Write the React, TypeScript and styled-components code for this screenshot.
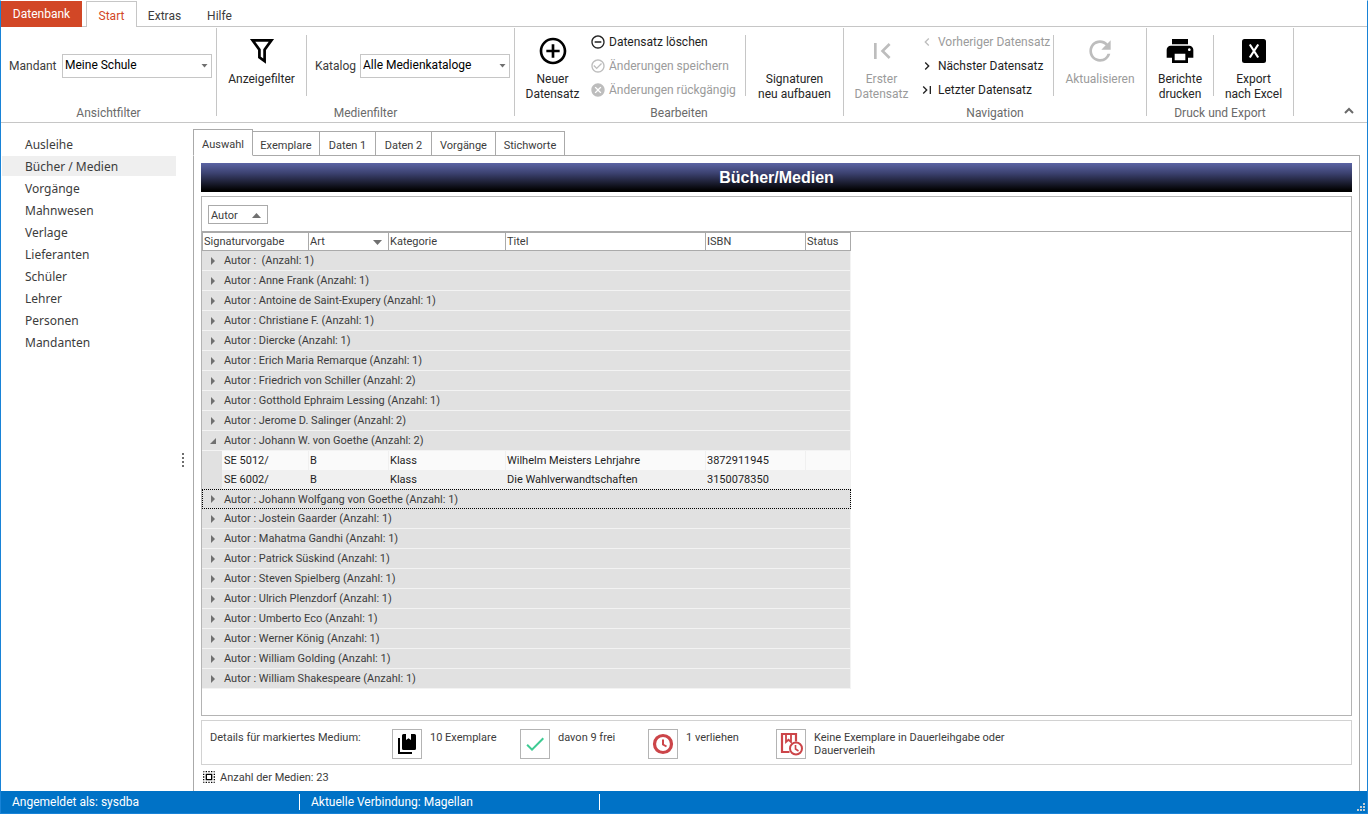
import React, { useState } from "react";
import styled, { createGlobalStyle, css } from "styled-components";
import {
  MdAddCircleOutline,
  MdRemoveCircleOutline,
  MdCheckCircleOutline,
  MdCancel,
  MdFirstPage,
  MdLastPage,
  MdNavigateBefore,
  MdNavigateNext,
  MdRefresh,
  MdPrint,
  MdCheck,
  MdSelectAll,
} from "react-icons/md";

const uiFont = `Roboto, "Open Sans", sans-serif`;
const sidebarFont = `"Noto Sans", "Open Sans", sans-serif`;

const GlobalStyle = createGlobalStyle`
  *, *::before, *::after { box-sizing: border-box; }
  body { margin: 0; background: #fff; font-family: ${uiFont}; font-size: 11px; color: #3c3c3c; }
  button, select { font: inherit; color: inherit; }
`;

const Window = styled.div`
  display: flex;
  flex-direction: column;
  min-height: 100vh;
  border: 1px solid #1883d7;
  border-top-color: #fff;
`;

/* ---------- ribbon ---------- */

const RibbonTabs = styled.nav`
  display: flex;
  height: 26px;
  border-bottom: 1px solid #c6c6c6;
  font-size: 12px;
`;

const RibbonTab = styled.button<{ $kind?: "file" | "active" }>`
  height: 26px;
  padding: 3px 0 0;
  width: 55px;
  border: 0;
  background: none;
  color: #3c3c3c;
  ${(p) =>
    p.$kind === "file" &&
    css`
      width: 81px;
      padding: 0;
      margin-right: 4px;
      background: #d24726;
      color: #fff;
    `}
  ${(p) =>
    p.$kind === "active" &&
    css`
      width: 51px;
      border: 1px solid #c6c6c6;
      border-bottom: 0;
      background: #fff;
      color: #d24726;
    `}
`;

const RibbonBar = styled.header`
  display: flex;
  height: 96px;
  border-bottom: 1px solid #c6c6c6;
  font-size: 12px;
`;

const Group = styled.section<{ $width: number }>`
  display: flex;
  flex-direction: column;
  justify-content: space-between;
  flex: none;
  width: ${(p) => p.$width}px;
`;

const GroupBody = styled.div`
  display: flex;
  align-items: flex-start;
`;

const GroupCaption = styled.div`
  line-height: 16px;
  padding-bottom: 1px;
  text-align: center;
  color: #6a6a6a;
`;

const GroupDivider = styled.div`
  flex: none;
  width: 1px;
  height: 88px;
  margin-top: 1px;
  background: #c6c6c6;
`;

const InnerDivider = styled.div`
  flex: none;
  width: 1px;
  height: 61px;
  margin-top: 8px;
  background: #c6c6c6;
`;

const BigButton = styled.button<{ $width: number }>`
  display: flex;
  flex-direction: column;
  align-items: center;
  gap: 5px;
  width: ${(p) => p.$width}px;
  padding: 8px 0 0;
  border: 0;
  background: none;
  line-height: 15px;
  text-align: center;
  white-space: pre-line;
  color: #262626;
  &:disabled {
    color: #9b9b9b;
  }
`;

const BigIcon = styled.span`
  display: flex;
  align-items: center;
  justify-content: center;
  width: 32px;
  height: 32px;
  color: #000;
  ${BigButton}:disabled & {
    color: #bdbdbd;
  }
`;

const CommandList = styled.div<{ $width: number }>`
  display: flex;
  flex-direction: column;
  width: ${(p) => p.$width}px;
  padding-top: 3px;
`;

const Command = styled.button`
  display: flex;
  align-items: center;
  gap: 3px;
  height: 24px;
  padding: 0;
  border: 0;
  background: none;
  white-space: nowrap;
  color: #1e1e1e;
  svg {
    flex: none;
    color: #222;
  }
  &:disabled {
    color: #9b9b9b;
  }
  &:disabled svg {
    color: #bdbdbd;
  }
`;

const Field = styled.div`
  display: flex;
  align-items: center;
  justify-content: space-between;
  flex: 1;
  margin: 27px 4px 0 8px;
`;

const SelectBox = styled.div`
  display: grid;
  align-items: center;
  width: 150px;
  & > * {
    grid-area: 1 / 1;
  }
  svg {
    justify-self: end;
    margin-right: 4px;
    pointer-events: none;
  }
`;

const Select = styled.select`
  width: 100%;
  height: 24px;
  padding: 0 16px 2px 2px;
  border: 1px solid #c6c6c6;
  border-radius: 0;
  appearance: none;
  background: #fff;
  color: #000;
`;

const Collapse = styled.button`
  display: flex;
  align-self: flex-end;
  margin: 0 11px 6px auto;
  padding: 2px;
  border: 0;
  background: none;
`;

/* ---------- body ---------- */

const Body = styled.main`
  display: flex;
  flex: 1;
`;

const Sidebar = styled.nav`
  display: flex;
  flex-direction: column;
  gap: 2px;
  flex: none;
  width: 176px;
  padding: 11px 1px 0;
  font-family: ${sidebarFont};
`;

const SideLink = styled.a<{ $active?: boolean }>`
  height: 20px;
  padding-left: 23px;
  line-height: 22px;
  font-size: 12px;
  color: #3c3c3c;
  text-decoration: none;
  background: ${(p) => (p.$active ? "#efefef" : "none")};
`;

const Splitter = styled.div`
  display: flex;
  flex-direction: column;
  align-items: center;
  justify-content: center;
  gap: 2px;
  flex: none;
  width: 11px;
  margin-right: 5px;
  padding-top: 6px;
  span {
    width: 2px;
    height: 2px;
    background: #6e6e6e;
  }
`;

const Content = styled.div`
  display: flex;
  flex-direction: column;
  flex: 1;
  min-width: 0;
  padding: 6px 7px 0 0;
`;

const Tabs = styled.div`
  display: flex;
  align-items: flex-end;
  height: 27px;
`;

const Tab = styled.button<{ $active?: boolean; $width: number }>`
  width: ${(p) => p.$width}px;
  height: 25px;
  padding: 4px 0 0;
  border: 1px solid #aaa;
  border-left-width: 0;
  background: #fff;
  white-space: nowrap;
  ${(p) =>
    p.$active &&
    css`
      height: 27px;
      border-left-width: 1px;
      border-bottom-color: #fff;
    `}
`;

const TabFill = styled.div`
  flex: 1;
  border-bottom: 1px solid #aaa;
`;

const Panel = styled.div`
  display: flex;
  flex-direction: column;
  flex: 1;
  padding: 7px 7px 0;
  border: 1px solid #aaa;
  border-width: 0 1px;
`;

const Banner = styled.h1`
  margin: 0 0 4px;
  height: 29px;
  line-height: 29px;
  text-align: center;
  font-family: "Liberation Sans", Arial, sans-serif;
  font-size: 16px;
  color: #fff;
  background: linear-gradient(#5b64a4, #3c4270 35%, #1a1c2e 70%, #000 95%);
`;

const GridBox = styled.div`
  flex: 1;
  border: 1px solid #b4b4b4;
`;

const GroupPanel = styled.div`
  height: 35px;
  padding: 8px 6px 0;
  border-bottom: 1px solid #aaa;
`;

const GroupChip = styled.button`
  display: flex;
  align-items: center;
  justify-content: space-between;
  width: 60px;
  height: 19px;
  padding: 1px 6px 0 2px;
  border: 1px solid #aaa;
  background: #fff;
`;

const Table = styled.table`
  width: 649px;
  table-layout: fixed;
  border-collapse: separate;
  border-spacing: 0;
  th {
    height: 19px;
    padding: 1px 6px 0 1px;
    border: 1px solid #aaa;
    border-left-width: 0;
    text-align: left;
    font-weight: normal;
    line-height: 16px;
  }
  th:first-child {
    border-left-width: 1px;
  }
  td {
    padding: 0 0 0 1px;
    line-height: 16px;
    white-space: nowrap;
  }
`;

const HeadCell = styled.div`
  display: flex;
  align-items: center;
  justify-content: space-between;
`;

const GroupRow = styled.tr<{ $focused?: boolean }>`
  background: #e1e1e1;
  td {
    height: 20px;
    padding: 0;
    border-bottom: 1px solid #f3f3f3;
    border-right: 1px solid #f3f3f3;
  }
  ${(p) =>
    p.$focused &&
    css`
      td {
        border: 1px dotted #000;
      }
    `}
`;

const GroupToggle = styled.button<{ $focused?: boolean }>`
  display: flex;
  align-items: center;
  width: 100%;
  padding: 1px 0 0 ${(p) => (p.$focused ? 6 : 7)}px;
  border: 0;
  background: none;
  line-height: 16px;
  white-space: pre;
  svg {
    flex: none;
    margin: 0 7px 1px 0;
  }
`;

const DataRow = styled.tr<{ $alt?: boolean }>`
  background: ${(p) => (p.$alt ? "#f0f0f0" : "#fafafa")};
  color: #1e1e1e;
  td {
    height: 19px;
    border-right: 1px solid #f0f0f0;
  }
  td:first-child {
    background: #e1e1e1;
    border: 0;
  }
  td:nth-child(2) {
    padding-left: 2px;
  }
`;

const Details = styled.section`
  display: flex;
  align-items: flex-start;
  height: 45px;
  margin-top: 4px;
  padding: 8px 8px 0;
  border: 1px solid #d2d2d2;
  line-height: 13px;
`;

const DetailsTitle = styled.div`
  flex: none;
  width: 182px;
  padding-top: 2px;
`;

const Detail = styled.div<{ $width: number }>`
  display: flex;
  gap: 8px;
  flex: 0 1 ${(p) => p.$width}px;
  padding-right: 8px;
`;

const DetailIcon = styled.span`
  display: flex;
  align-items: center;
  justify-content: center;
  flex: none;
  width: 30px;
  height: 30px;
  border: 1px solid #b4b4b4;
`;

const DetailText = styled.span`
  padding-top: 2px;
`;

const CountLine = styled.div`
  display: flex;
  align-items: center;
  gap: 3px;
  height: 26px;
  padding: 0 0 2px 0;
`;

const StatusBar = styled.footer`
  display: flex;
  align-items: center;
  height: 22px;
  background: #0072c6;
  color: #fff;
  font-size: 12px;
  svg {
    align-self: flex-end;
    margin: 0 2px 2px auto;
  }
`;

const StatusCell = styled.div<{ $width: number }>`
  display: flex;
  align-items: center;
  width: ${(p) => p.$width}px;
  height: 16px;
  padding-left: 11px;
  border-right: 1px solid #fff;
`;

/* ---------- drawings ---------- */

const Triangle = ({ dir }: { dir: "up" | "down" | "right" | "open" }) => {
  const points = {
    up: "0,6 4.5,1 9,6",
    down: "0,1 9,1 4.5,6",
    right: "2,0 6,4 2,8",
    open: "1,7 7,1 7,7",
  }[dir];
  const wide = dir === "up" || dir === "down";
  return (
    <svg width={wide ? 9 : 8} height={wide ? 7 : 8} aria-hidden="true">
      <polygon points={points} fill="#707070" />
    </svg>
  );
};

const FunnelIcon = () => (
  <svg width="32" height="32" viewBox="0 0 32 32" aria-hidden="true">
    <path
      d="M6.6 5.4H25.4L18.6 14.6V26.2L13.4 22.4V14.6Z"
      fill="none"
      stroke="currentColor"
      strokeWidth="2.7"
    />
  </svg>
);

const ExcelIcon = () => (
  <svg width="32" height="32" viewBox="0 0 32 32" aria-hidden="true">
    <rect x="4" y="4" width="24" height="24" rx="2.5" fill="currentColor" />
    <path d="M11.8 9.5L20.2 22.5M20.2 9.5L11.8 22.5" stroke="#fff" strokeWidth="2.2" />
  </svg>
);

const BooksIcon = () => (
  <svg width="20" height="22" viewBox="0 0 20 22" aria-hidden="true">
    <path d="M6 1H9V7L11.5 5.2L14 7V1H17.5Q19 1 19 2.5V15.5Q19 17 17.5 17H6.5Q5 17 5 15.5V2.5Q5 1 6.5 1Z" />
    <path d="M2 5V20H15" fill="none" stroke="#000" strokeWidth="2" />
  </svg>
);

const ClockIcon = () => (
  <svg width="22" height="22" viewBox="0 0 22 22" fill="none" stroke="#cc4549" aria-hidden="true">
    <circle cx="11" cy="11" r="8.5" strokeWidth="3.2" />
    <path d="M11 6.5V11.5L14.5 13.5" strokeWidth="2" />
  </svg>
);

const BookClockIcon = () => (
  <svg width="24" height="24" viewBox="0 0 24 24" fill="none" stroke="#cc4549" aria-hidden="true">
    <path d="M10.5 20H3V2H17V9.5" strokeWidth="2.2" />
    <path d="M7 2V10L9.5 7.8L12 10V2" strokeWidth="1.8" />
    <circle cx="17" cy="16.5" r="6" strokeWidth="2" fill="#fff" />
    <path d="M16.5 13V17L19.5 19" strokeWidth="1.6" />
  </svg>
);

const GripIcon = () => (
  <svg width="8" height="8" fill="#c4cdd4" aria-hidden="true">
    <path d="M6 0h2v2h-2zM3 3h2v2h-2zM6 3h2v2h-2zM0 6h2v2h-2zM3 6h2v2h-2zM6 6h2v2h-2z" />
  </svg>
);

/* ---------- data ---------- */

type Book = { sig: string; art: string; kategorie: string; titel: string; isbn: string };
type Author = { name: string; count: number; books?: Book[] };

const authors: Author[] = [
  { name: "", count: 1 },
  { name: "Anne Frank", count: 1 },
  { name: "Antoine de Saint-Exupery", count: 1 },
  { name: "Christiane F.", count: 1 },
  { name: "Diercke", count: 1 },
  { name: "Erich Maria Remarque", count: 1 },
  { name: "Friedrich von Schiller", count: 2 },
  { name: "Gotthold Ephraim Lessing", count: 1 },
  { name: "Jerome D. Salinger", count: 2 },
  {
    name: "Johann W. von Goethe",
    count: 2,
    books: [
      { sig: "SE 5012/", art: "B", kategorie: "Klass", titel: "Wilhelm Meisters Lehrjahre", isbn: "3872911945" },
      { sig: "SE 6002/", art: "B", kategorie: "Klass", titel: "Die Wahlverwandtschaften", isbn: "3150078350" },
    ],
  },
  { name: "Johann Wolfgang von Goethe", count: 1 },
  { name: "Jostein Gaarder", count: 1 },
  { name: "Mahatma Gandhi", count: 1 },
  { name: "Patrick Süskind", count: 1 },
  { name: "Steven Spielberg", count: 1 },
  { name: "Ulrich Plenzdorf", count: 1 },
  { name: "Umberto Eco", count: 1 },
  { name: "Werner König", count: 1 },
  { name: "William Golding", count: 1 },
  { name: "William Shakespeare", count: 1 },
];

const sideItems = [
  "Ausleihe",
  "Bücher / Medien",
  "Vorgänge",
  "Mahnwesen",
  "Verlage",
  "Lieferanten",
  "Schüler",
  "Lehrer",
  "Personen",
  "Mandanten",
];

const tabs: [string, number][] = [
  ["Auswahl", 60],
  ["Exemplare", 67],
  ["Daten 1", 56],
  ["Daten 2", 56],
  ["Vorgänge", 64],
  ["Stichworte", 69],
];

const ComboBox = ({ id, label, value }: { id: string; label: string; value: string }) => (
  <Field>
    <label htmlFor={id}>{label}</label>
    <SelectBox>
      <Select id={id} defaultValue={value}>
        <option>{value}</option>
      </Select>
      <svg width="7" height="4" aria-hidden="true">
        <polygon points="0.5,0 6.5,0 3.5,3.5" fill="#707070" />
      </svg>
    </SelectBox>
  </Field>
);

const Ribbon = () => (
  <RibbonBar>
    <Group $width={215}>
      <GroupBody>
        <ComboBox id="mandant" label="Mandant" value="Meine Schule" />
      </GroupBody>
      <GroupCaption>Ansichtfilter</GroupCaption>
    </Group>
    <GroupDivider />
    <Group $width={297}>
      <GroupBody>
        <BigButton $width={89}>
          <BigIcon><FunnelIcon /></BigIcon>
          Anzeigefilter
        </BigButton>
        <InnerDivider />
        <ComboBox id="katalog" label="Katalog" value="Alle Medienkataloge" />
      </GroupBody>
      <GroupCaption>Medienfilter</GroupCaption>
    </Group>
    <GroupDivider />
    <Group $width={328}>
      <GroupBody>
        <BigButton $width={75}>
          <BigIcon><MdAddCircleOutline size={32} /></BigIcon>
          {"Neuer\nDatensatz"}
        </BigButton>
        <CommandList $width={155}>
          <Command><MdRemoveCircleOutline size={16} />Datensatz löschen</Command>
          <Command disabled><MdCheckCircleOutline size={16} />Änderungen speichern</Command>
          <Command disabled><MdCancel size={16} />Änderungen rückgängig</Command>
        </CommandList>
        <InnerDivider />
        <BigButton $width={97}>
          <BigIcon />
          {"Signaturen\nneu aufbauen"}
        </BigButton>
      </GroupBody>
      <GroupCaption>Bearbeiten</GroupCaption>
    </Group>
    <GroupDivider />
    <Group $width={302}>
      <GroupBody>
        <BigButton $width={75} disabled>
          <BigIcon><MdFirstPage size={32} /></BigIcon>
          {"Erster\nDatensatz"}
        </BigButton>
        <CommandList $width={134}>
          <Command disabled><MdNavigateBefore size={16} />Vorheriger Datensatz</Command>
          <Command><MdNavigateNext size={16} />Nächster Datensatz</Command>
          <Command><MdLastPage size={16} />Letzter Datensatz</Command>
        </CommandList>
        <InnerDivider />
        <BigButton $width={92} disabled>
          <BigIcon><MdRefresh size={32} /></BigIcon>
          Aktualisieren
        </BigButton>
      </GroupBody>
      <GroupCaption>Navigation</GroupCaption>
    </Group>
    <GroupDivider />
    <Group $width={146}>
      <GroupBody>
        <BigButton $width={66}>
          <BigIcon><MdPrint size={32} /></BigIcon>
          {"Berichte\ndrucken"}
        </BigButton>
        <InnerDivider />
        <BigButton $width={79}>
          <BigIcon><ExcelIcon /></BigIcon>
          {"Export\nnach Excel"}
        </BigButton>
      </GroupBody>
      <GroupCaption>Druck und Export</GroupCaption>
    </Group>
    <GroupDivider />
    <Collapse aria-label="Menüband reduzieren">
      <svg width="10" height="7" aria-hidden="true">
        <path d="M1 6L5 2L9 6" fill="none" stroke="#6a6a6a" strokeWidth="2" />
      </svg>
    </Collapse>
  </RibbonBar>
);

const BookTable = () => {
  const [open, setOpen] = useState<Record<string, boolean>>({ "Johann W. von Goethe": true });
  return (
    <Table>
      <colgroup>
        {[20, 87, 80, 117, 200, 100, 45].map((w, i) => (
          <col key={i} width={w} />
        ))}
      </colgroup>
      <thead>
        <tr>
          <th colSpan={2}>Signaturvorgabe</th>
          <th><HeadCell>Art<Triangle dir="down" /></HeadCell></th>
          <th>Kategorie</th>
          <th>Titel</th>
          <th>ISBN</th>
          <th>Status</th>
        </tr>
      </thead>
      <tbody>
        {authors.map((a) => {
          const expanded = !!open[a.name];
          const focused = a.name === "Johann Wolfgang von Goethe";
          return (
            <React.Fragment key={a.name}>
              <GroupRow $focused={focused}>
                <td colSpan={7}>
                  <GroupToggle
                    $focused={focused}
                    aria-expanded={expanded}
                    onClick={() => setOpen({ ...open, [a.name]: !expanded })}
                  >
                    <Triangle dir={expanded ? "open" : "right"} />
                    {`Autor : ${a.name} (Anzahl: ${a.count})`}
                  </GroupToggle>
                </td>
              </GroupRow>
              {expanded &&
                a.books?.map((b, i) => (
                  <DataRow key={b.sig} $alt={i % 2 === 1}>
                    <td />
                    <td>{b.sig}</td>
                    <td>{b.art}</td>
                    <td>{b.kategorie}</td>
                    <td>{b.titel}</td>
                    <td>{b.isbn}</td>
                    <td />
                  </DataRow>
                ))}
            </React.Fragment>
          );
        })}
      </tbody>
    </Table>
  );
};

export default function App() {
  return (
    <Window>
      <GlobalStyle />
      <RibbonTabs>
        <RibbonTab $kind="file">Datenbank</RibbonTab>
        <RibbonTab $kind="active">Start</RibbonTab>
        <RibbonTab>Extras</RibbonTab>
        <RibbonTab>Hilfe</RibbonTab>
      </RibbonTabs>
      <Ribbon />
      <Body>
        <Sidebar>
          {sideItems.map((item) => (
            <SideLink key={item} href="#" $active={item === "Bücher / Medien"}>
              {item}
            </SideLink>
          ))}
        </Sidebar>
        <Splitter>
          <span />
          <span />
          <span />
          <span />
        </Splitter>
        <Content>
          <Tabs>
            {tabs.map(([label, width], i) => (
              <Tab key={label} $width={width} $active={i === 0}>
                {label}
              </Tab>
            ))}
            <TabFill />
          </Tabs>
          <Panel>
            <Banner>Bücher/Medien</Banner>
            <GridBox>
              <GroupPanel>
                <GroupChip>
                  Autor
                  <Triangle dir="up" />
                </GroupChip>
              </GroupPanel>
              <BookTable />
            </GridBox>
            <Details>
              <DetailsTitle>Details für markiertes Medium:</DetailsTitle>
              <Detail $width={128}>
                <DetailIcon><BooksIcon /></DetailIcon>
                <DetailText>10 Exemplare</DetailText>
              </Detail>
              <Detail $width={128}>
                <DetailIcon><MdCheck size={24} color="#3ecb93" /></DetailIcon>
                <DetailText>davon 9 frei</DetailText>
              </Detail>
              <Detail $width={128}>
                <DetailIcon><ClockIcon /></DetailIcon>
                <DetailText>1 verliehen</DetailText>
              </Detail>
              <Detail $width={248}>
                <DetailIcon><BookClockIcon /></DetailIcon>
                <DetailText>Keine Exemplare in Dauerleihgabe oder Dauerverleih</DetailText>
              </Detail>
            </Details>
            <CountLine>
              <MdSelectAll size={16} color="#000" />
              Anzahl der Medien: 23
            </CountLine>
          </Panel>
        </Content>
      </Body>
      <StatusBar>
        <StatusCell $width={299}>Angemeldet als: sysdba</StatusCell>
        <StatusCell $width={300}>Aktuelle Verbindung: Magellan</StatusCell>
        <GripIcon />
      </StatusBar>
    </Window>
  );
}
